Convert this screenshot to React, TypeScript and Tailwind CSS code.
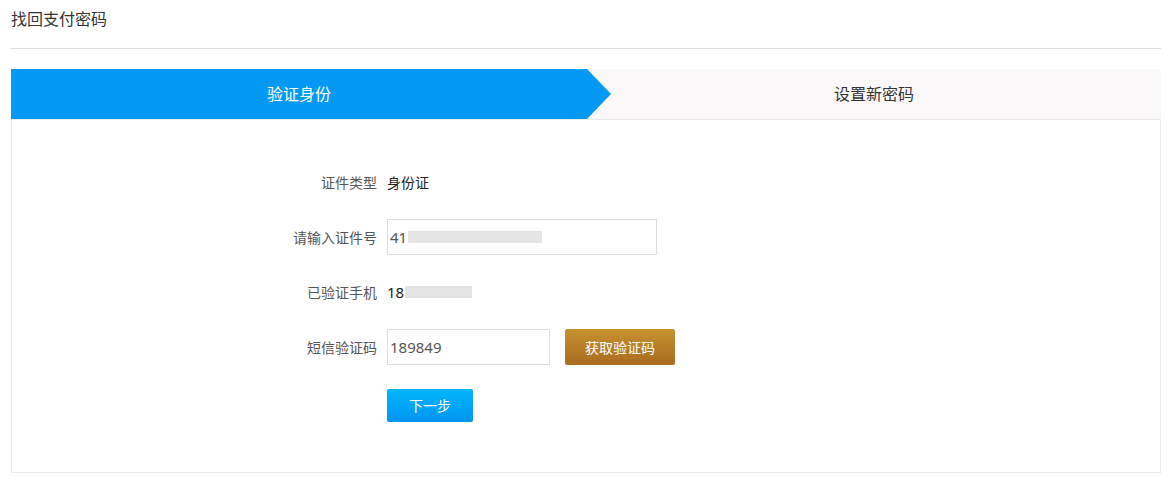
import React from "react";

const font = { fontFamily: '"Noto Sans", "Noto Sans CJK SC", sans-serif' };

function Row({ label, children }: { label: string; children: React.ReactNode }) {
  return (
    <div className="flex h-[36px] items-center mb-[19px]">
      <div className="w-[375px] shrink-0 text-right text-[14px] text-[#555] pr-[10px]">{label}</div>
      <div className="flex items-center">{children}</div>
    </div>
  );
}

export default function App() {
  return (
    <div className="bg-white min-h-[481px] text-[#333]" style={font}>
      <div className="ml-[11px] w-[1150px]">
        <div className="h-[49px] border-b border-[#dedede] pt-[9px] text-[16px] leading-[20px] text-[#333]">
          找回支付密码
        </div>
        <div className="mt-[20px] flex h-[50px] bg-[#faf8f9]">
          <div className="relative flex w-[576px] items-center justify-center bg-[#0499f2] text-[16px] text-white">
            验证身份
            <svg className="absolute left-full top-0" width="24" height="50" viewBox="0 0 24 50">
              <polygon points="0,0 24,25 0,50" fill="#0499f2" />
            </svg>
          </div>
          <div className="flex flex-1 items-center justify-center text-[16px] text-[#333]">设置新密码</div>
        </div>
        <div className="h-[354px] border border-[#e9e9e9] pt-[44px]">
          <Row label="证件类型">
            <span className="text-[14px] text-[#222]">身份证</span>
          </Row>
          <Row label="请输入证件号">
            <div className="flex h-[36px] w-[270px] items-center border border-[#dddddd] pl-[2px] text-[15px] text-[#555]">
              41
              <span className="ml-[1px] inline-block h-[12px] w-[134px] bg-[#e4e4e4]" />
            </div>
          </Row>
          <Row label="已验证手机">
            <span className="text-[15px] text-[#222]">18</span>
            <span className="ml-[1px] inline-block h-[12px] w-[67px] bg-[#e4e4e4]" />
          </Row>
          <Row label="短信验证码">
            <div className="flex h-[36px] w-[163px] items-center border border-[#dddddd] pl-[2px] text-[15px] text-[#555]">
              189849
            </div>
            <button className="ml-[15px] flex h-[36px] w-[110px] items-center justify-center rounded-[2px] bg-gradient-to-b from-[#c6922e] to-[#a96c21] text-[14px] text-white">
              获取验证码
            </button>
          </Row>
          <div className="pt-[5px]">
            <div className="flex">
              <div className="w-[375px] shrink-0" />
              <button className="flex h-[33px] w-[86px] items-center justify-center rounded-[2px] bg-gradient-to-b from-[#00b6fb] to-[#0095f2] text-[14px] text-white">
                下一步
              </button>
            </div>
          </div>
        </div>
      </div>
    </div>
  );
}
